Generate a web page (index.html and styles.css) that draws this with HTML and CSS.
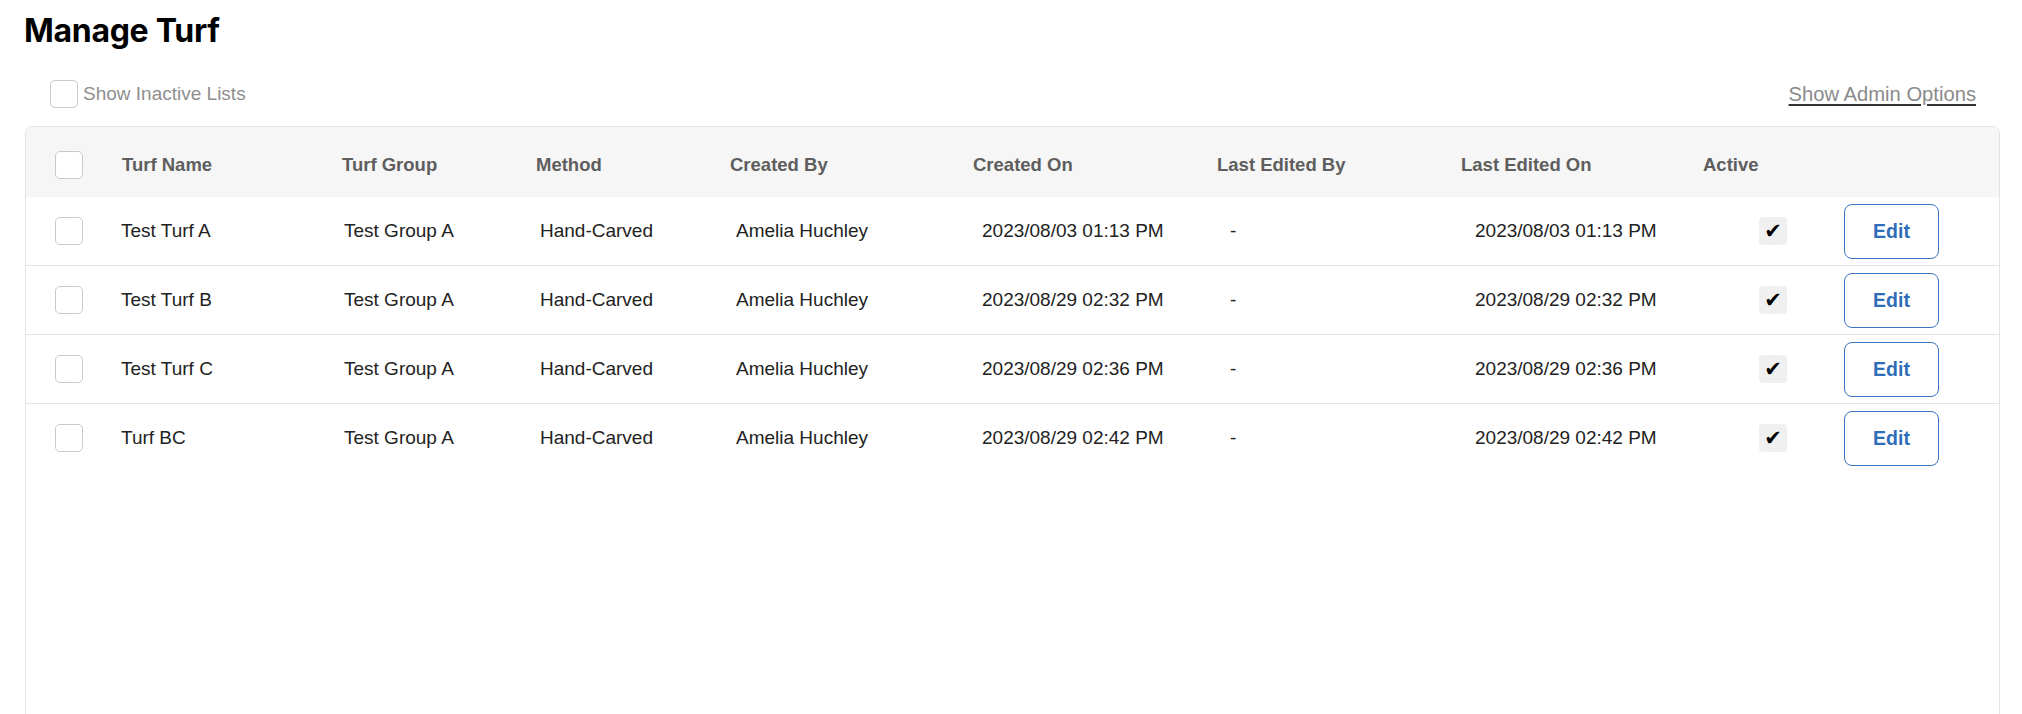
FILE: index.html
```html
<!DOCTYPE html>
<html lang="en">
<head>
<meta charset="utf-8">
<title>Manage Turf</title>
<link rel="stylesheet" href="styles.css">
</head>
<body>
<div class="page">
  <h1 class="title">Manage Turf</h1>
  <div class="options">
    <label class="inactive">
      <span class="cb"></span>
      <span class="inactive-label">Show Inactive Lists</span>
    </label>
    <a class="admin-link" href="#">Show Admin Options</a>
  </div>
  <div class="card">
    <div class="head">
      <span class="cb"></span>
      <span>Turf Name</span>
      <span>Turf Group</span>
      <span>Method</span>
      <span>Created By</span>
      <span>Created On</span>
      <span>Last Edited By</span>
      <span>Last Edited On</span>
      <span>Active</span>
    </div>
    <div class="row">
      <span class="cb"></span>
      <span>Test Turf A</span>
      <span>Test Group A</span>
      <span>Hand-Carved</span>
      <span>Amelia Huchley</span>
      <span>2023/08/03 01:13 PM</span>
      <span>-</span>
      <span>2023/08/03 01:13 PM</span>
      <span class="active"><span class="tick">✔</span></span>
      <span><button class="edit">Edit</button></span>
    </div>
    <div class="row">
      <span class="cb"></span>
      <span>Test Turf B</span>
      <span>Test Group A</span>
      <span>Hand-Carved</span>
      <span>Amelia Huchley</span>
      <span>2023/08/29 02:32 PM</span>
      <span>-</span>
      <span>2023/08/29 02:32 PM</span>
      <span class="active"><span class="tick">✔</span></span>
      <span><button class="edit">Edit</button></span>
    </div>
    <div class="row">
      <span class="cb"></span>
      <span>Test Turf C</span>
      <span>Test Group A</span>
      <span>Hand-Carved</span>
      <span>Amelia Huchley</span>
      <span>2023/08/29 02:36 PM</span>
      <span>-</span>
      <span>2023/08/29 02:36 PM</span>
      <span class="active"><span class="tick">✔</span></span>
      <span><button class="edit">Edit</button></span>
    </div>
    <div class="row last">
      <span class="cb"></span>
      <span>Turf BC</span>
      <span>Test Group A</span>
      <span>Hand-Carved</span>
      <span>Amelia Huchley</span>
      <span>2023/08/29 02:42 PM</span>
      <span>-</span>
      <span>2023/08/29 02:42 PM</span>
      <span class="active"><span class="tick">✔</span></span>
      <span><button class="edit">Edit</button></span>
    </div>
  </div>
</div>
</body>
</html>
```
FILE: styles.css
```css
html, body {
  margin: 0;
  padding: 0;
  overflow: hidden;
  background: #ffffff;
}

.page {
  padding: 0 22px 0 25px;
  font-family: "Liberation Sans", Arial, Helvetica, sans-serif;
}

.title {
  margin: 11px 0 0 -1px;
  font-family: Inter, "Noto Sans", sans-serif;
  font-weight: 700;
  font-size: 32px;
  line-height: 40px;
  color: #000000;
  letter-spacing: -0.3px;
}

.options {
  margin-top: 29px;
  height: 28px;
  display: flex;
  align-items: center;
  justify-content: space-between;
}

.inactive {
  display: flex;
  align-items: center;
  gap: 5px;
  margin-left: 25px;
}

.inactive-label {
  font-size: 19px;
  color: #8e8e8e;
}

.admin-link {
  margin-right: 24px;
  font-size: 20.2px;
  color: #8a8a8a;
  text-decoration: underline;
  text-decoration-color: #333333;
  text-decoration-thickness: 2px;
  text-underline-offset: 3px;
}

.cb {
  display: block;
  box-sizing: border-box;
  width: 28px;
  height: 28px;
  border: 1px solid #c9c9c9;
  border-radius: 5px;
  background: #ffffff;
}

.card {
  margin-top: 18px;
  border: 1px solid #e3e3e3;
  border-radius: 7px;
  min-height: 640px;
  overflow: hidden;
}

.head {
  display: grid;
  grid-template-columns: 67px 220px 194px 194px 243px 244px 244px 242px 1fr;
  align-items: center;
  box-sizing: border-box;
  height: 70px;
  padding: 6px 0 0 29px;
  background: #f6f6f6;
  font-weight: 700;
  font-size: 18.5px;
  color: #5e5e5e;
}

.row {
  display: grid;
  grid-template-columns: 66px 223px 196px 196px 246px 248px 245px 284px 85px 95px 1fr;
  align-items: center;
  height: 68px;
  padding-left: 29px;
  border-bottom: 1px solid #e4e4e4;
  font-size: 19px;
  color: #222222;
}

.row.last {
  border-bottom: none;
}

.active {
  display: flex;
}

.tick {
  display: flex;
  align-items: center;
  justify-content: center;
  width: 28px;
  height: 28px;
  border-radius: 4px;
  background: #f0f0f0;
  font-family: "DejaVu Sans", sans-serif;
  font-size: 21px;
  line-height: 1;
  color: #000000;
}

.edit {
  display: block;
  box-sizing: border-box;
  width: 95px;
  height: 55px;
  border: 1px solid #3a76c4;
  border-radius: 8px;
  background: #ffffff;
  font-family: "Liberation Sans", Arial, sans-serif;
  font-weight: 700;
  font-size: 19.5px;
  color: #2f6db8;
  padding: 0;
}
```
